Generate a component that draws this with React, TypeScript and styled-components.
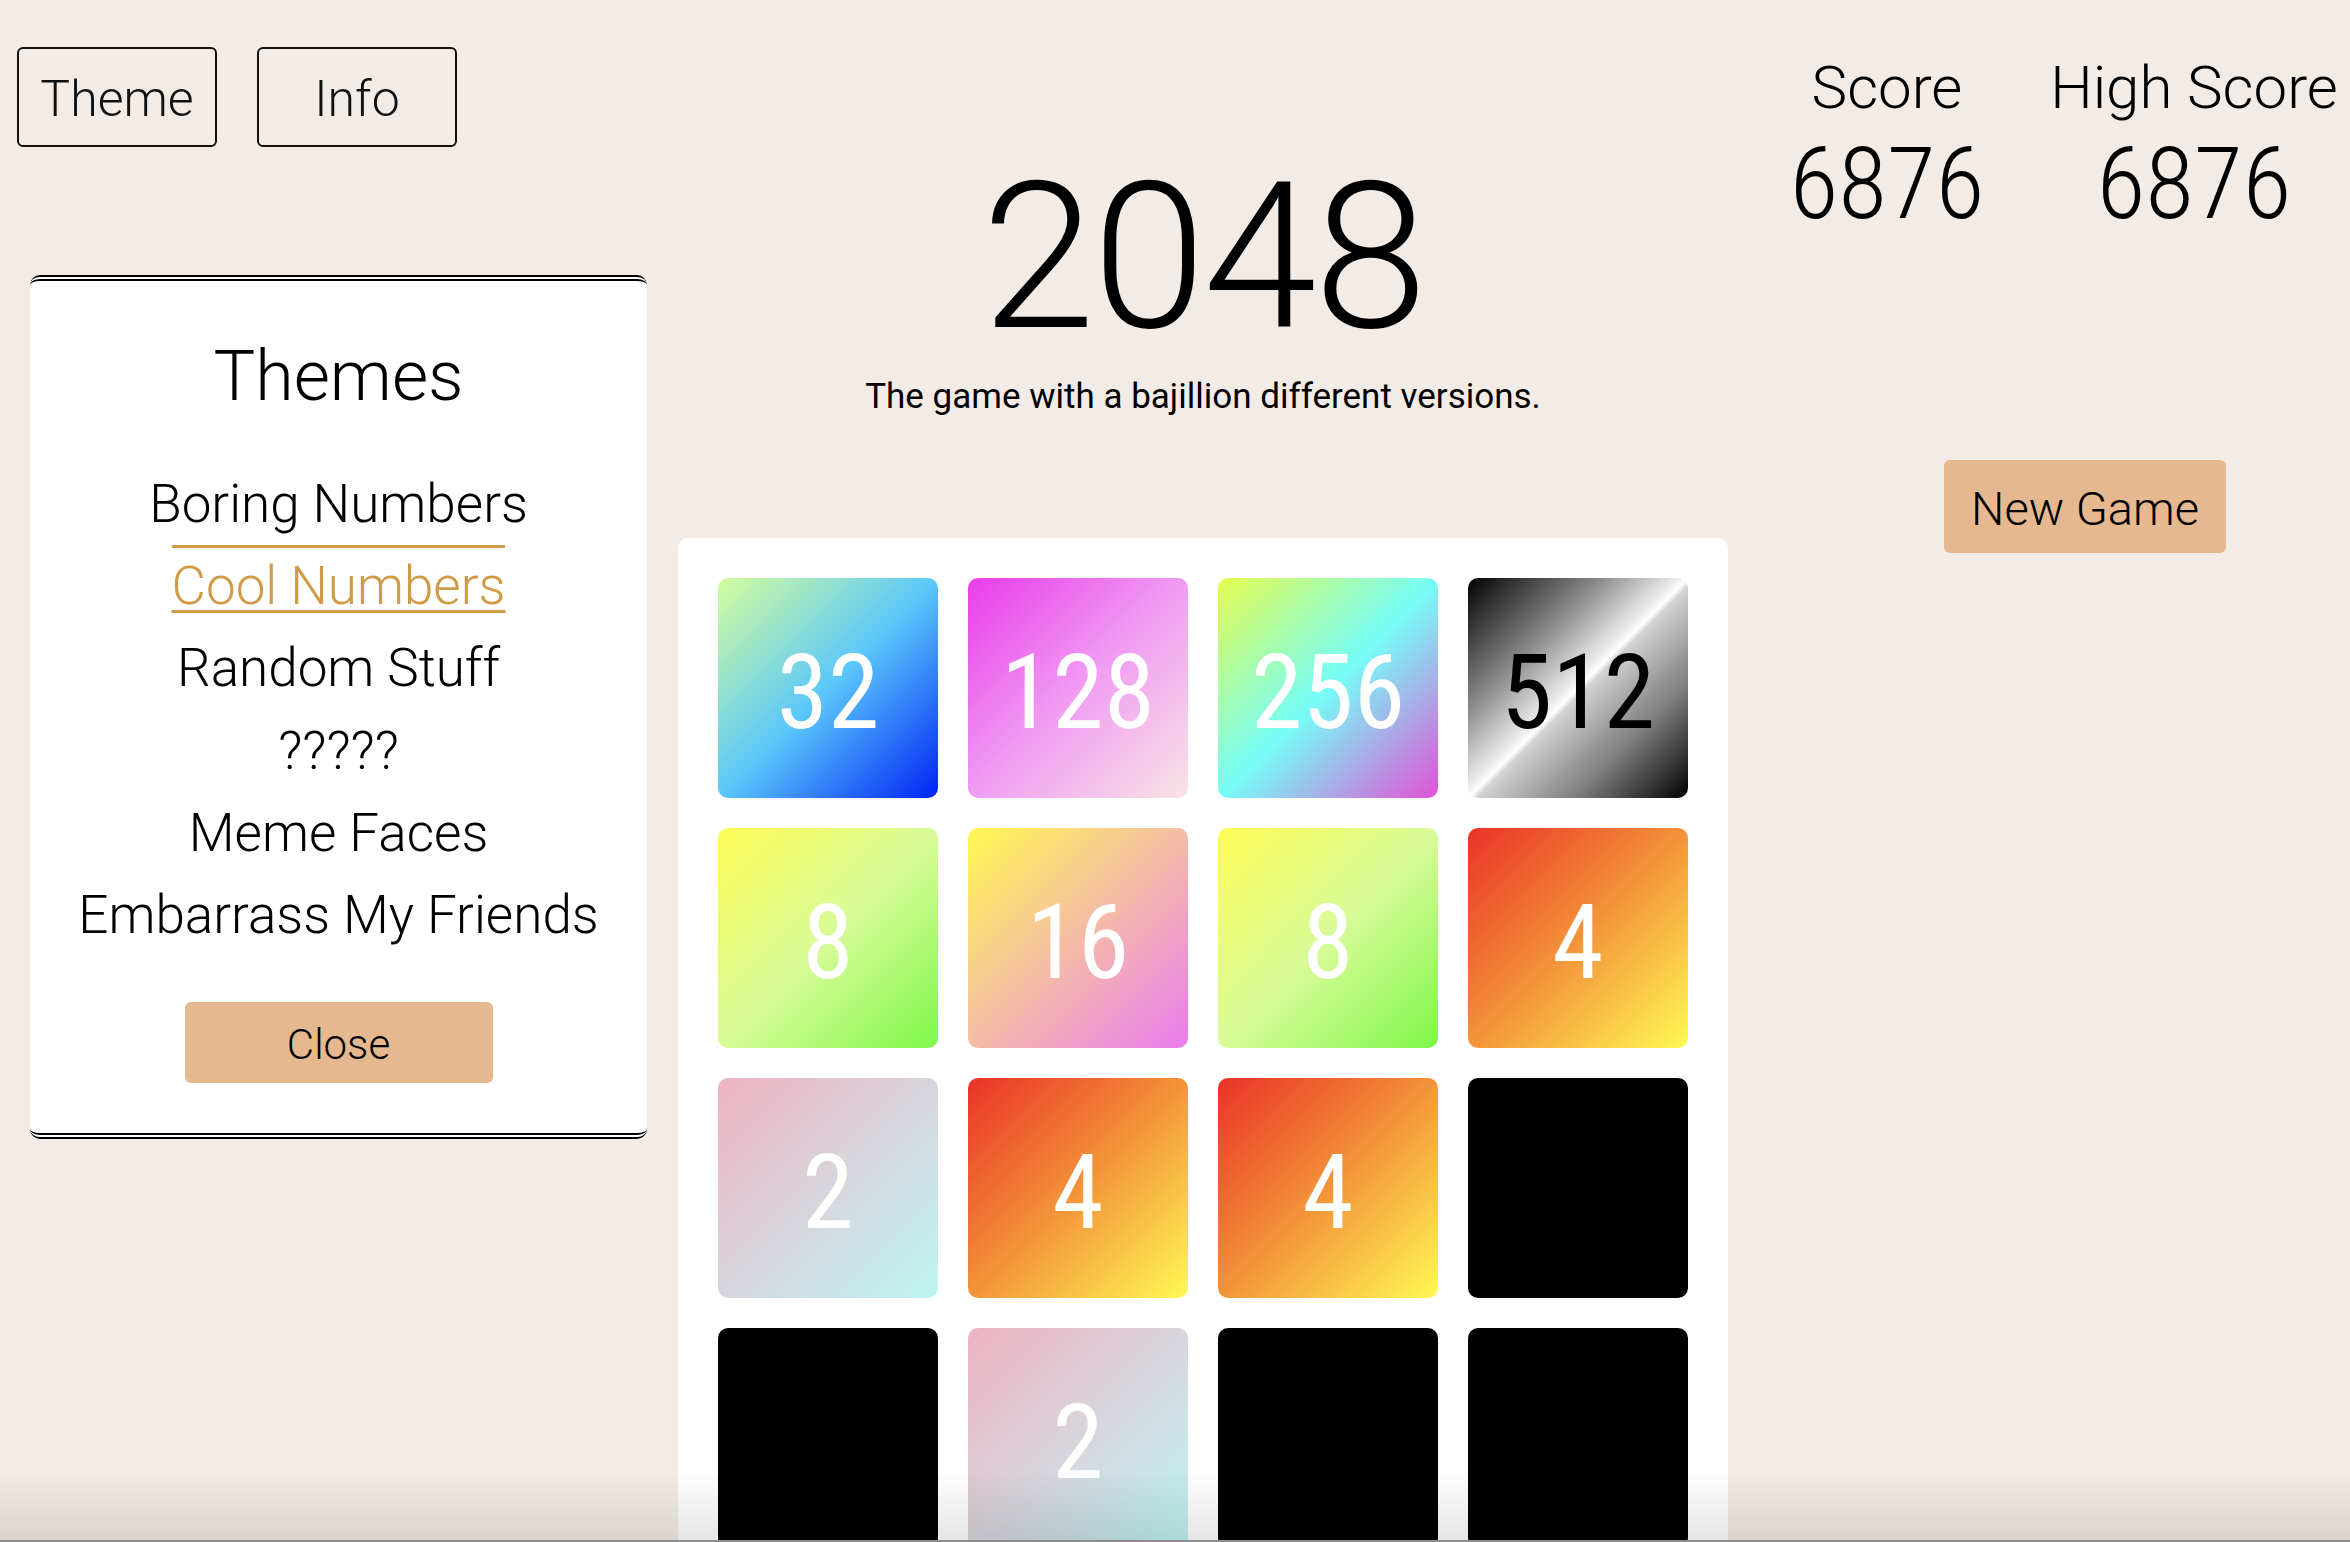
import React from "react";
import styled, { createGlobalStyle } from "styled-components";

const GlobalStyle = createGlobalStyle`
  html, body { margin: 0; padding: 0; }
  body {
    background: #f3ece6;
    font-family: Roboto, "Liberation Sans", sans-serif;
    color: #000;
  }
`;

const numFont = `"Roboto Condensed", Roboto, "Liberation Sans", sans-serif`;

const Page = styled.div`
  display: grid;
  grid-template-columns: 678px 1050px 1fr;
  min-height: 100vh;
`;

const LeftCol = styled.aside`
  display: flex;
  flex-direction: column;
  align-items: flex-start;
  padding-top: 47px;
`;

const ButtonRow = styled.div`
  display: flex;
  gap: 40px;
  margin-left: 17px;
`;

const OutlineButton = styled.button`
  width: 200px;
  height: 100px;
  box-sizing: border-box;
  border: 2px solid #111;
  border-radius: 6px;
  background: transparent;
  font-family: Roboto, sans-serif;
  font-weight: 300;
  font-size: 50px;
  color: #111;
  padding: 4px 0 0;
  cursor: pointer;
`;

const ThemePanel = styled.section`
  margin: 128px 0 0 30px;
  width: 617px;
  box-sizing: border-box;
  background: #fff;
  border-top: 6px double #000;
  border-bottom: 6px double #000;
  border-radius: 10px;
  padding: 53px 0 50px;
  display: flex;
  flex-direction: column;
  align-items: center;
`;

const PanelTitle = styled.h2`
  margin: 0;
  font-size: 70px;
  font-weight: 300;
  line-height: 84px;
`;

const ThemeList = styled.ul`
  list-style: none;
  margin: 45px 0 0;
  padding: 0;
  text-align: center;
`;

const ThemeItem = styled.li<{ $active?: boolean }>`
  font-size: 53px;
  font-weight: 300;
  line-height: 82.2px;
  color: ${(p) => (p.$active ? "#d09a47" : "#000")};
  cursor: pointer;
`;

const ActiveLabel = styled.span`
  display: inline-block;
  line-height: 76px;
  border-top: 3px solid currentColor;
  text-decoration: underline;
  text-decoration-thickness: 3px;
  text-underline-offset: 6px;
`;

const PeachButton = styled.button<{ $w: number; $h: number; $fs: number }>`
  width: ${(p) => p.$w}px;
  height: ${(p) => p.$h}px;
  border: none;
  border-radius: 6px;
  background: #e6b88f;
  font-family: Roboto, sans-serif;
  font-weight: 300;
  font-size: ${(p) => p.$fs}px;
  color: #000;
  padding: 4px 0 0;
  cursor: pointer;
`;

const CloseButton = styled(PeachButton)`
  margin-top: 46px;
`;

const CenterCol = styled.main`
  display: flex;
  flex-direction: column;
  align-items: stretch;
  padding-top: 155px;
`;

const Title = styled.h1`
  margin: 0;
  font-size: 205px;
  font-weight: 300;
  line-height: 205px;
  letter-spacing: -3px;
  text-align: center;
`;

const Subtitle = styled.p`
  margin: 16px 0 0;
  font-size: 35px;
  font-weight: 400;
  line-height: 42px;
  text-align: center;
`;

const Board = styled.div`
  margin-top: 120px;
  background: #fff;
  border-radius: 10px;
  padding: 40px;
  display: grid;
  grid-template-columns: repeat(4, 220px);
  grid-auto-rows: 220px;
  gap: 30px;
`;

const Tile = styled.div<{ $bg: string; $dark?: boolean }>`
  border-radius: 10px;
  background: ${(p) => p.$bg};
  display: flex;
  align-items: center;
  justify-content: center;
  padding-top: 10px;
  box-sizing: border-box;
  font-family: ${numFont};
  font-weight: 400;
  font-size: 104px;
  line-height: 1;
  color: ${(p) => (p.$dark ? "#000" : "#fff")};
`;

const RightCol = styled.aside`
  display: flex;
  flex-direction: column;
  align-items: flex-end;
  padding: 52px 12px 0 0;
`;

const Scores = styled.div`
  display: flex;
  gap: 63px;
`;

const ScoreBox = styled.div<{ $w: number }>`
  width: ${(p) => p.$w}px;
  text-align: center;
`;

const ScoreLabel = styled.div`
  font-size: 60px;
  font-weight: 300;
  line-height: 72px;
  white-space: nowrap;
`;

const ScoreValue = styled.div`
  margin-top: 10px;
  font-family: ${numFont};
  font-size: 100px;
  font-weight: 300;
  line-height: 100px;
`;

const NewGameButton = styled(PeachButton)`
  margin: 226px 112px 0 0;
`;

const BottomShade = styled.div`
  position: fixed;
  left: 0;
  right: 0;
  bottom: 0;
  height: 72px;
  pointer-events: none;
  background: linear-gradient(to bottom, rgba(0, 0, 0, 0), rgba(0, 0, 0, 0.1));
  border-bottom: 2px solid #8c8c8c;
  box-sizing: border-box;
`;

const G = {
  2: "linear-gradient(135deg, #eeb2c1 0%, #d8d5dc 50%, #bcf5f2 100%)",
  4: "linear-gradient(135deg, #ea3227 0%, #f39339 50%, #fff955 100%)",
  8: "linear-gradient(135deg, #fdfc56 0%, #d8fb98 50%, #7ef84a 100%)",
  16: "linear-gradient(135deg, #fff850 0%, #f5c29e 45%, #ea7bf0 100%)",
  32: "linear-gradient(135deg, #d6fd9c 0%, #5ac8fa 50%, #0022f5 100%)",
  128: "linear-gradient(135deg, #e93ce9 0%, #f09cf3 50%, #f8e4e4 100%)",
  256: "linear-gradient(135deg, #e6fc4e 0%, #76fdf7 50%, #e152d6 100%)",
  512: "linear-gradient(135deg, #000 0%, #8a8a8a 30%, #eeeeee 48%, #fff 50%, #d2d2d2 52%, #7a7a7a 75%, #000 100%)",
} as Record<number, string>;

const cells: number[] = [32, 128, 256, 512, 8, 16, 8, 4, 2, 4, 4, 0, 0, 2, 0, 0];

const themes = ["Boring Numbers", "Cool Numbers", "Random Stuff", "?????", "Meme Faces", "Embarrass My Friends"];
const activeTheme = "Cool Numbers";

export default function App() {
  return (
    <>
      <GlobalStyle />
      <Page>
        <LeftCol>
          <ButtonRow>
            <OutlineButton>Theme</OutlineButton>
            <OutlineButton>Info</OutlineButton>
          </ButtonRow>
          <ThemePanel>
            <PanelTitle>Themes</PanelTitle>
            <ThemeList>
              {themes.map((t) => (
                <ThemeItem key={t} $active={t === activeTheme}>
                  {t === activeTheme ? <ActiveLabel>{t}</ActiveLabel> : t}
                </ThemeItem>
              ))}
            </ThemeList>
            <CloseButton $w={308} $h={81} $fs={42}>
              Close
            </CloseButton>
          </ThemePanel>
        </LeftCol>
        <CenterCol>
          <Title>2048</Title>
          <Subtitle>The game with a bajillion different versions.</Subtitle>
          <Board>
            {cells.map((v, i) => (
              <Tile key={i} $bg={v ? G[v] : "#000"} $dark={v === 512}>
                {v ? v : ""}
              </Tile>
            ))}
          </Board>
        </CenterCol>
        <RightCol>
          <Scores>
            <ScoreBox $w={200}>
              <ScoreLabel>Score</ScoreLabel>
              <ScoreValue>6876</ScoreValue>
            </ScoreBox>
            <ScoreBox $w={288}>
              <ScoreLabel>High Score</ScoreLabel>
              <ScoreValue>6876</ScoreValue>
            </ScoreBox>
          </Scores>
          <NewGameButton $w={282} $h={93} $fs={47}>
            New Game
          </NewGameButton>
        </RightCol>
      </Page>
      <BottomShade />
    </>
  );
}
